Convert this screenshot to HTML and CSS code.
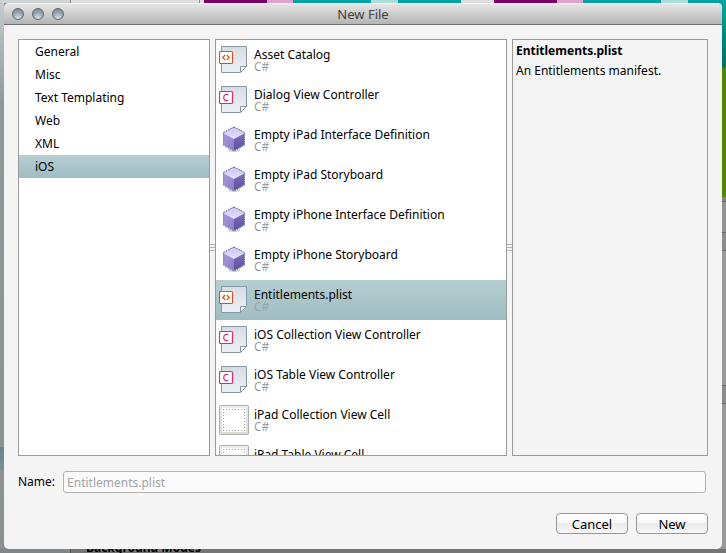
FILE: index.html
```html
<!DOCTYPE html>
<html lang="en">
<head>
<meta charset="utf-8">
<title>New File</title>
<link rel="stylesheet" href="styles.css">
</head>
<body>
<svg class="defs" aria-hidden="true">
  <defs>
    <linearGradient id="paper" x1="0" y1="0" x2="0" y2="1"><stop offset="0" stop-color="#d5dce3"/><stop offset="1" stop-color="#edf1f4"/></linearGradient>
    <linearGradient id="top" x1="0" y1="0" x2="0" y2="1"><stop offset="0" stop-color="#c9c2f2"/><stop offset="1" stop-color="#e6e2ff"/></linearGradient>
    <linearGradient id="cl" x1="0" y1="0" x2="1" y2="1"><stop offset="0" stop-color="#a699dc"/><stop offset="1" stop-color="#8a7dc4"/></linearGradient>
    <linearGradient id="cr" x1="0" y1="0" x2="0" y2="1"><stop offset="0" stop-color="#7f70bc"/><stop offset="1" stop-color="#5b4b9c"/></linearGradient>
    <linearGradient id="frame" x1="0" y1="0" x2="0" y2="1"><stop offset="0" stop-color="#ebece9"/><stop offset="1" stop-color="#d9ddd5"/></linearGradient>
    <g id="page">
      <path d="M2.500 1.500H27.500V21L21 27.500H2.500Z" fill="url(#paper)" stroke="#8696a2"/>
      <path d="M27.500 21.500H21.500V27.500Z" fill="#fff" stroke="#8696a2"/>
    </g>
    <symbol id="markup" viewBox="0 0 30 30">
      <use href="#page"/>
      <rect x=".5" y="6.500" width="13" height="12" rx="1" fill="#fff" stroke="#e0501e" stroke-width="1.200"/>
      <path d="M6.200 10L3.700 12.500L6.200 15M7.800 10L10.300 12.500L7.800 15" fill="none" stroke="#e0501e" stroke-width="1.200"/>
    </symbol>
    <symbol id="class" viewBox="0 0 30 30">
      <use href="#page"/>
      <rect x=".5" y="6.500" width="13" height="12" rx="1" fill="#fff" stroke="#e6267b" stroke-width="1.200"/>
      <path d="M9.300 9.700C6.800 8.600 4.700 10 4.700 12.500S6.800 16.400 9.300 15.300" fill="none" stroke="#e6267b" stroke-width="1.200"/>
    </symbol>
    <symbol id="cube" viewBox="0 0 30 30">
      <ellipse cx="15" cy="25" rx="6" ry="2" fill="#aaa" opacity=".5"/>
      <path d="M15 2L26 8L15 14L4 8Z" fill="url(#top)"/>
      <path d="M4 8L15 14V26L4 20Z" fill="url(#cl)"/>
      <path d="M26 8L15 14V26L26 20Z" fill="url(#cr)"/>
      <path d="M15 2L25.500 7.500V20L15 26L4.500 20V7.500Z" fill="none" stroke="#d8dff2"/>
      <path d="M15 2L25.500 7.500V20L15 26L4.500 20V7.500Z" fill="none" stroke="#2f4382" stroke-dasharray="1 1"/>
    </symbol>
    <symbol id="cell" viewBox="0 0 30 30">
      <rect x=".5" y=".5" width="29" height="29" rx="1" fill="url(#frame)" stroke="#adb0aa"/>
      <rect x="3" y="3" width="24" height="24" fill="#fff"/>
      <path d="M4 4.500H26M4 25.500H26M4.500 4V26M25.500 4V26" fill="none" stroke="#a4a8a2" stroke-dasharray="1 2"/>
    </symbol>
  </defs>
</svg>
<div class="desktop">
  <div class="strip-top"></div>
  <div class="strip-left"></div>
  <main class="window">
    <header class="titlebar">
      <div class="lights">
        <button type="button" aria-label="Close"></button>
        <button type="button" aria-label="Minimize"></button>
        <button type="button" aria-label="Zoom"></button>
      </div>
      <h1>New File</h1>
    </header>
    <form class="content">
      <div class="panes">
        <ul class="pane categories">
          <li>General</li>
          <li>Misc</li>
          <li>Text Templating</li>
          <li>Web</li>
          <li>XML</li>
          <li class="selected">iOS</li>
        </ul>
        <div class="grip"></div>
        <ul class="pane templates">
          <li><svg><use href="#markup"/></svg><div><p>Asset Catalog</p><small>C#</small></div></li>
          <li><svg><use href="#class"/></svg><div><p>Dialog View Controller</p><small>C#</small></div></li>
          <li><svg><use href="#cube"/></svg><div><p>Empty iPad Interface Definition</p><small>C#</small></div></li>
          <li><svg><use href="#cube"/></svg><div><p>Empty iPad Storyboard</p><small>C#</small></div></li>
          <li><svg><use href="#cube"/></svg><div><p>Empty iPhone Interface Definition</p><small>C#</small></div></li>
          <li><svg><use href="#cube"/></svg><div><p>Empty iPhone Storyboard</p><small>C#</small></div></li>
          <li class="selected"><svg><use href="#markup"/></svg><div><p>Entitlements.plist</p><small>C#</small></div></li>
          <li><svg><use href="#class"/></svg><div><p>iOS Collection View Controller</p><small>C#</small></div></li>
          <li><svg><use href="#class"/></svg><div><p>iOS Table View Controller</p><small>C#</small></div></li>
          <li><svg><use href="#cell"/></svg><div><p>iPad Collection View Cell</p><small>C#</small></div></li>
          <li><svg><use href="#cell"/></svg><div><p>iPad Table View Cell</p></div></li>
        </ul>
        <div class="grip"></div>
        <section class="pane details">
          <h2>Entitlements.plist</h2>
          <p>An Entitlements manifest.</p>
        </section>
      </div>
      <div class="name-row">
        <label for="name">Name:</label>
        <input id="name" type="text" value="Entitlements.plist" disabled>
      </div>
      <div class="actions">
        <button type="button">Cancel</button>
        <button type="submit">New</button>
      </div>
    </form>
  </main>
  <div class="strip-right"></div>
  <div class="strip-bottom"><span>Background Modes</span></div>
</div>
</body>
</html>
```
FILE: styles.css
```css
* { box-sizing: border-box; }
body, h1, h2, p, ul { margin: 0; padding: 0; }
body {
  font: 12px/16px "Noto Sans", "Open Sans", sans-serif;
  color: #000;
  background: #8b8f90;
}
ul { list-style: none; }
.defs { position: absolute; width: 0; height: 0; }

.desktop {
  display: grid;
  grid-template: 3px minmax(0, 1fr) 4px / 4px minmax(0, 1fr) 4px;
  height: 100vh;
  overflow: hidden;
}
.strip-top {
  grid-column: 1 / -1;
  background: linear-gradient(90deg,
    #cbd3d5 70px, #888 70px 71px, #dedede 71px 199px, #888 199px 200px, #ddd 200px 204px,
    #7d0068 204px 267px, #dfa3cd 267px 293px, #00a39f 293px 371px, #a9dcda 371px 398px, #00a39f 398px 461px,
    #ddd 461px 494px, #7d0068 494px 557px, #dfa3cd 557px 583px, #00a39f 583px 661px, #a9dcda 661px 688px, #00a39f 688px);
}
.strip-left {
  background:
    linear-gradient(#6d8587, #7a9092) 0 444px / 4px 23px no-repeat,
    linear-gradient(#c3cbcd, #929899 100px, #8b8f90);
}
.strip-right {
  background: linear-gradient(#00a39f, #006f70 63px, #4c8a00 66px, #4c8a00 194px, #858585 194px 198px, #666 198px 199px,
    #949494 199px 229px, #666 229px 230px, #8c8c8c 230px 247px, #666 247px 248px, #999 248px 382px,
    #666 382px 383px, #8c8c8c 383px 400px, #666 400px 401px, #999 401px);
}
.strip-bottom {
  grid-column: 1 / -1;
  display: flex;
  align-items: flex-end;
  padding-left: 86px;
  overflow: hidden;
  background: linear-gradient(90deg, #7d8585 70px, #555 70px 71px, #757575 71px);
}
.strip-bottom span { font-weight: 700; line-height: 10px; }

.window {
  display: flex;
  flex-direction: column;
  min-height: 0;
  border-radius: 5px;
  overflow: hidden;
  background: #f4f4f4;
}
.titlebar {
  display: grid;
  grid-template-columns: 1fr auto 1fr;
  align-items: center;
  height: 22px;
  padding: 0 8px;
  border-top: 1px solid #f5f5f5;
  border-bottom: 1px solid #6c6c6c;
  background: linear-gradient(#e6e6e6, #b4b4b4);
}
.titlebar h1 { font-size: 13px; font-weight: 400; line-height: 18px; color: #3f3f3f; }
.lights { display: flex; gap: 8px; }
.lights button {
  width: 12px;
  height: 12px;
  padding: 0;
  border: 1px solid #5f6870;
  border-radius: 50%;
  background: radial-gradient(circle at 50% 90%, #dbe6ee, #9dacb8 45%, #71808c);
}

.content {
  flex: 1;
  display: flex;
  flex-direction: column;
  min-height: 0;
  padding: 14px 14px 15px;
}
.panes {
  flex: 1;
  display: grid;
  grid-template-columns: minmax(0, 192fr) 5px minmax(0, 292fr) 5px minmax(0, 196fr);
  grid-template-rows: minmax(0, 1fr);
  min-height: 0;
}
.pane { border: 1px solid #9b9b9b; overflow: hidden; background: #fff; }
.selected { background: linear-gradient(#b6ced1, #9fbdc1); }
.categories li { padding: 4px 16px 3px; }
.templates li { display: flex; gap: 5px; height: 40px; padding: 5px 3px; }
.templates svg { width: 30px; height: 30px; }
.templates p { line-height: 14px; padding-top: 3px; }
.templates small { display: block; font-size: 12px; line-height: 10px; color: #9f9f9f; }
.templates .selected small { color: #96a5a6; }
.grip {
  align-self: center;
  height: 7px;
  background: repeating-linear-gradient(#b4b4b4 0 1px, transparent 1px 3px);
}
.details { padding: 3px; background: #f4f4f4; }
.details h2 { font-size: 12px; font-weight: 700; }
.details p { padding-top: 4px; }

.name-row { display: flex; align-items: center; gap: 8px; margin: 15px 2px 20px 0; }
.name-row input {
  flex: 1;
  min-width: 0;
  height: 22px;
  padding: 0 3px;
  border: 1px solid #b2b2b2;
  border-radius: 3px;
  font: inherit;
  color: #a5a5a5;
  background: #fafafa;
}
.actions { display: flex; justify-content: flex-end; gap: 8px; }
.actions button {
  width: 72px;
  height: 21px;
  padding: 0;
  border: 1px solid #969696;
  border-radius: 4px;
  font: inherit;
  font-size: 13px;
  color: #000;
  background: linear-gradient(#fff, #f7f7f7 50%, #ebebeb 50%, #f6f6f6);
}
```
